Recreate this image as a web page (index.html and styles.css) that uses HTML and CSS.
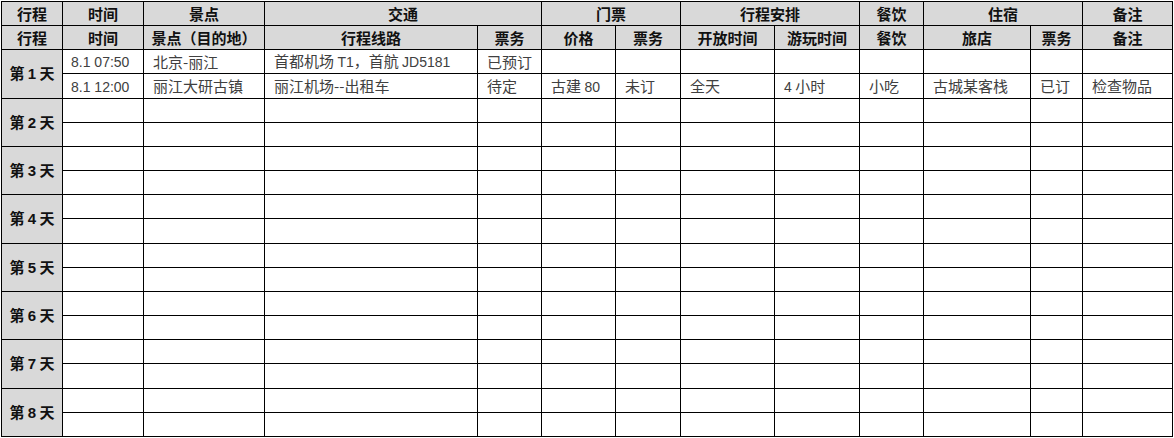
FILE: index.html
```html
<!DOCTYPE html>
<html lang="zh-CN">
<head>
<meta charset="utf-8">
<title>行程安排</title>
<link rel="stylesheet" href="styles.css">
</head>
<body>
<table class="plan">
  <colgroup>
    <col class="c1"><col class="c2"><col class="c3"><col class="c4"><col class="c5"><col class="c6"><col class="c7"><col class="c8"><col class="c9"><col class="c10"><col class="c11"><col class="c12"><col class="c13">
  </colgroup>
  <thead>
    <tr>
      <th>行程</th><th>时间</th><th>景点</th><th colspan="2">交通</th><th colspan="2">门票</th><th colspan="2">行程安排</th><th>餐饮</th><th colspan="2">住宿</th><th>备注</th>
    </tr>
    <tr>
      <th>行程</th><th>时间</th><th>景点（目的地）</th><th>行程线路</th><th>票务</th><th>价格</th><th>票务</th><th>开放时间</th><th>游玩时间</th><th>餐饮</th><th>旅店</th><th>票务</th><th>备注</th>
    </tr>
  </thead>
  <tbody>
    <tr>
      <th rowspan="2" class="day">第 <span class="num">1</span> 天</th>
      <td><span class="lat">8.1 07:50</span></td><td>北京-丽江</td><td>首都机场 <span class="lat">T1</span>，首航 <span class="lat">JD5181</span></td><td>已预订</td><td></td><td></td><td></td><td></td><td></td><td></td><td></td><td></td>
    </tr>
    <tr>
      <td><span class="lat">8.1 12:00</span></td><td>丽江大研古镇</td><td>丽江机场--出租车</td><td>待定</td><td>古建 <span class="lat">80</span></td><td>未订</td><td>全天</td><td><span class="lat">4</span> 小时</td><td>小吃</td><td>古城某客栈</td><td>已订</td><td>检查物品</td>
    </tr>
    <tr><th rowspan="2" class="day">第 <span class="num">2</span> 天</th><td></td><td></td><td></td><td></td><td></td><td></td><td></td><td></td><td></td><td></td><td></td><td></td></tr>
    <tr><td></td><td></td><td></td><td></td><td></td><td></td><td></td><td></td><td></td><td></td><td></td><td></td></tr>
    <tr><th rowspan="2" class="day">第 <span class="num">3</span> 天</th><td></td><td></td><td></td><td></td><td></td><td></td><td></td><td></td><td></td><td></td><td></td><td></td></tr>
    <tr><td></td><td></td><td></td><td></td><td></td><td></td><td></td><td></td><td></td><td></td><td></td><td></td></tr>
    <tr><th rowspan="2" class="day">第 <span class="num">4</span> 天</th><td></td><td></td><td></td><td></td><td></td><td></td><td></td><td></td><td></td><td></td><td></td><td></td></tr>
    <tr><td></td><td></td><td></td><td></td><td></td><td></td><td></td><td></td><td></td><td></td><td></td><td></td></tr>
    <tr><th rowspan="2" class="day">第 <span class="num">5</span> 天</th><td></td><td></td><td></td><td></td><td></td><td></td><td></td><td></td><td></td><td></td><td></td><td></td></tr>
    <tr><td></td><td></td><td></td><td></td><td></td><td></td><td></td><td></td><td></td><td></td><td></td><td></td></tr>
    <tr><th rowspan="2" class="day">第 <span class="num">6</span> 天</th><td></td><td></td><td></td><td></td><td></td><td></td><td></td><td></td><td></td><td></td><td></td><td></td></tr>
    <tr><td></td><td></td><td></td><td></td><td></td><td></td><td></td><td></td><td></td><td></td><td></td><td></td></tr>
    <tr><th rowspan="2" class="day">第 <span class="num">7</span> 天</th><td></td><td></td><td></td><td></td><td></td><td></td><td></td><td></td><td></td><td></td><td></td><td></td></tr>
    <tr><td></td><td></td><td></td><td></td><td></td><td></td><td></td><td></td><td></td><td></td><td></td><td></td></tr>
    <tr><th rowspan="2" class="day">第 <span class="num">8</span> 天</th><td></td><td></td><td></td><td></td><td></td><td></td><td></td><td></td><td></td><td></td><td></td><td></td></tr>
    <tr><td></td><td></td><td></td><td></td><td></td><td></td><td></td><td></td><td></td><td></td><td></td><td></td></tr>
  </tbody>
</table>
</body>
</html>
```
FILE: styles.css
```css
html, body {
  margin: 0;
  padding: 0;
  background: #ffffff;
}
body {
  padding: 1px 0 0 1px;
}
.plan {
  border-collapse: collapse;
  table-layout: fixed;
  width: 1172px;
  font-family: "Noto Sans CJK SC", "Liberation Sans", sans-serif;
  font-size: 15px;
}
.c1 { width: 61px; }
.c2 { width: 81px; }
.c3 { width: 121px; }
.c4 { width: 213px; }
.c5 { width: 64px; }
.c6 { width: 74px; }
.c7 { width: 65px; }
.c8 { width: 94px; }
.c9 { width: 85px; }
.c10 { width: 64px; }
.c11 { width: 107px; }
.c12 { width: 52px; }
.c13 { width: 90px; }
.plan tr {
  height: 24.17px;
}
.plan th,
.plan td {
  border: 1px solid #000;
  padding: 0;
  line-height: 18px;
  white-space: nowrap;
  overflow: hidden;
  vertical-align: middle;
}
.plan th {
  background: #d9d9d9;
  color: #111;
  font-weight: 700;
  text-align: center;
}
.plan td {
  background: #ffffff;
  color: #404040;
  font-weight: 400;
  text-align: left;
  padding-left: 8px;
}
.plan td + td {
  padding-left: 9px;
}
.lat {
  font-family: "Liberation Sans", sans-serif;
  font-size: 14px;
}
.num {
  font-family: "Liberation Sans", sans-serif;
  font-size: 15px;
}
.day {
  padding-top: 2px;
}
```
